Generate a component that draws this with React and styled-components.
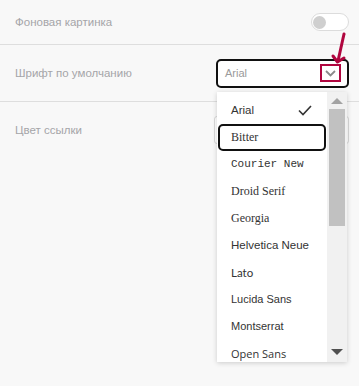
import React from 'react'
import styled, { createGlobalStyle } from 'styled-components'

const GlobalStyle = createGlobalStyle`
	html, body {
		margin: 0;
		padding: 0;
		background: #f8f8f8;
		font-family: "Liberation Sans", Arial, sans-serif;
	}
`

const fonts = [
	{ name: 'Arial', family: '"Liberation Sans", sans-serif', size: 11.5, checked: true },
	{ name: 'Bitter', family: '"Liberation Serif", serif', size: 12, focused: true },
	{ name: 'Courier New', family: '"Liberation Mono", monospace', size: 11 },
	{ name: 'Droid Serif', family: '"Liberation Serif", serif', size: 12 },
	{ name: 'Georgia', family: '"Liberation Serif", serif', size: 12 },
	{ name: 'Helvetica Neue', family: '"Liberation Sans", sans-serif', size: 11.5 },
	{ name: 'Lato', family: 'Lato, sans-serif', size: 11.5 },
	{ name: 'Lucida Sans', family: '"Liberation Sans", sans-serif', size: 11 },
	{ name: 'Montserrat', family: '"Liberation Sans", sans-serif', size: 11 },
	{ name: 'Open Sans', family: '"Open Sans", sans-serif', size: 11 }
]

const Page = styled.div`
	width: 359px;
	height: 386px;
	overflow: hidden;
	position: relative;
`
const Row = styled.div`
	display: flex;
	align-items: center;
	justify-content: space-between;
	height: ${props => props.height}px;
	padding: 0 10px 0 15px;
	border-bottom: ${props => props.last ? 'none' : '1px solid #dedede'};
`
const Label = styled.span`
	font-size: 11.5px;
	color: #a5a5a8;
`
const Toggle = styled.div`
	width: 34px;
	height: 16px;
	border: 1px solid #dcdcdc;
	border-radius: 9px;
	background: #fff;
	display: flex;
	align-items: center;
	padding: 0 1px;
`
const Knob = styled.div`
	width: 13px;
	height: 13px;
	border-radius: 50%;
	background: #cfcfcf;
`
const SelectWrap = styled.div`
	position: relative;
	width: 133px;
`
const SelectBox = styled.div`
	height: 25px;
	border: 2px solid #111;
	border-radius: 5px;
	background: #fff;
	display: flex;
	align-items: center;
	justify-content: space-between;
	padding: 0 6px 0 7px;
	font-size: 11px;
	color: #9a9a9a;
`
const ChevronMark = styled.div`
	width: 17px;
	height: 14px;
	border: 2px solid #b0063f;
	display: flex;
	align-items: center;
	justify-content: center;
`
const Pointer = styled.svg`
	position: absolute;
	right: 0;
	bottom: 100%;
	margin-bottom: -7px;
`
const Dropdown = styled.div`
	position: absolute;
	top: calc(100% + 4px);
	left: 1px;
	width: 130px;
	height: 270px;
	background: #fff;
	box-shadow: 0 1px 5px rgba(0, 0, 0, 0.18);
	display: flex;
	z-index: 2;
`
const List = styled.div`
	flex: 1;
	overflow: hidden;
	padding-top: 5px;
`
const Item = styled.div`
	height: 27px;
	box-sizing: border-box;
	margin: 0 1px;
	padding: 0 12px 0 11px;
	display: flex;
	align-items: center;
	justify-content: space-between;
	white-space: nowrap;
	color: #333;
	border: 2px solid ${props => props.focused ? '#111' : 'transparent'};
	border-radius: 5px;
`
const Scrollbar = styled.div`
	width: 20px;
	background: #f1f1f1;
	display: flex;
	flex-direction: column;
	align-items: center;
`
const ScrollArrow = styled.div`
	width: 0;
	height: 0;
	margin: ${props => props.down ? 'auto 0 7px' : '6px 0 5px'};
	border-left: 6px solid transparent;
	border-right: 6px solid transparent;
	${props => props.down ? 'border-top: 6px solid #505050;' : 'border-bottom: 6px solid #a3a3a3;'}
`
const Thumb = styled.div`
	width: 16px;
	height: 117px;
	background: #c1c1c1;
`
const ColorBox = styled.div`
	width: 133px;
	height: 26px;
	border: 1px solid #d8d8d8;
	border-radius: 3px;
	background: #fff;
`

const Check = () => (
	<svg width="14" height="11" viewBox="0 0 14 11">
		<path d="M1 5.5 L5 9.5 L13 1" fill="none" stroke="#333" strokeWidth="1.6" />
	</svg>
)

const Chevron = () => (
	<svg width="11" height="7" viewBox="0 0 11 7">
		<path d="M1 1 L5.5 5.5 L10 1" fill="none" stroke="#8a8a8a" strokeWidth="1.8" />
	</svg>
)

export default function App() {
	return (
		<Page>
			<GlobalStyle />
			<Row height={44}>
				<Label>Фоновая картинка</Label>
				<Toggle><Knob /></Toggle>
			</Row>
			<Row height={56}>
				<Label>Шрифт по умолчанию</Label>
				<SelectWrap>
					<Pointer width="20" height="34" viewBox="0 0 20 34">
						<path d="M15 2 L9 29" stroke="#b0063f" strokeWidth="3" fill="none" strokeLinecap="round" />
						<path d="M4 24 L8.5 30 L15 26" stroke="#b0063f" strokeWidth="3" fill="none" strokeLinecap="round" strokeLinejoin="round" />
					</Pointer>
					<SelectBox>
						Arial
						<ChevronMark><Chevron /></ChevronMark>
					</SelectBox>
					<Dropdown>
						<List>
							{fonts.map(font => (
								<Item
									key={font.name}
									focused={font.focused}
									style={{ fontFamily: font.family, fontSize: font.size }}
								>
									{font.name}
									{font.checked && <Check />}
								</Item>
							))}
						</List>
						<Scrollbar>
							<ScrollArrow />
							<Thumb />
							<ScrollArrow down />
						</Scrollbar>
					</Dropdown>
				</SelectWrap>
			</Row>
			<Row height={56} last>
				<Label>Цвет ссылки</Label>
				<ColorBox />
			</Row>
		</Page>
	)
}
